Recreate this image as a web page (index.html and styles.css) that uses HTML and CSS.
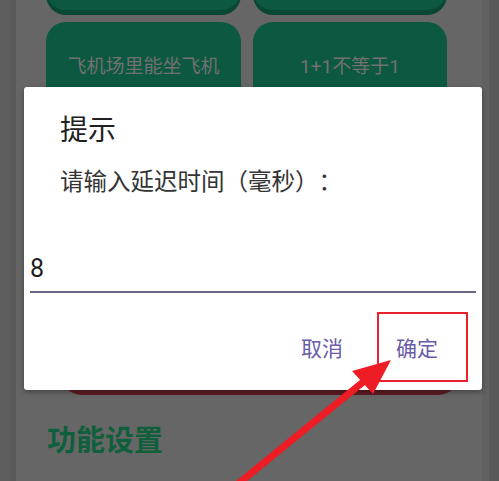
FILE: index.html
```html
<!DOCTYPE html>
<html lang="zh-CN">
<head>
<meta charset="utf-8">
<title>提示</title>
<link rel="stylesheet" href="styles.css">
</head>
<body>
<div class="screen">
  <div class="edge edge-a"></div>
  <div class="edge edge-b"></div>
  <main class="panel">
    <div class="grid">
      <div class="tile"></div>
      <div class="tile"></div>
      <div class="tile">飞机场里能坐飞机</div>
      <div class="tile">1+1不等于1</div>
    </div>
    <div class="danger"></div>
    <h2 class="section">功能设置</h2>
  </main>
  <div class="edge edge-c"></div>
  <div class="edge edge-d"></div>

  <div class="dialog">
    <div class="dlg-title">提示</div>
    <div class="dlg-msg">请输入延迟时间（毫秒）：</div>
    <div class="field">8</div>
    <div class="actions">
      <span class="btn">取消</span>
      <span class="btn">确定</span>
    </div>
  </div>

  <div class="mark"></div>
  <svg class="arrow" width="499" height="481" viewBox="0 0 499 481">
    <line x1="228" y1="492" x2="368" y2="378" stroke="#ee1c25" stroke-width="7"/>
    <polygon points="391,360 352,371 373,394" fill="#ee1c25"/>
  </svg>
</div>
</body>
</html>
```

FILE: styles.css
```css
* { box-sizing: border-box; }
html, body {
  margin: 0;
  padding: 0;
  width: 499px;
  height: 481px;
  overflow: hidden;
  background: #5b5b5b;
  font-family: Roboto, "Noto Sans CJK SC", sans-serif;
  text-spacing-trim: space-all;
}
.screen {
  position: relative;
  display: flex;
  width: 499px;
  height: 481px;
  overflow: hidden;
}
.edge { flex: none; height: 100%; }
.edge-a { width: 11px; background: #5e5e5e; }
.edge-b { width: 5px; background: #5a5a5a; }
.edge-c { width: 7px; background: #616161; }
.edge-d { width: 10px; background: #595959; }
.panel {
  flex: none;
  width: 466px;
  height: 100%;
  background: #666666;
  padding: 0 0 0 30px;
}
.grid {
  display: grid;
  grid-template-columns: 195px 194px;
  grid-auto-rows: 88px;
  column-gap: 12px;
  row-gap: 12px;
  margin-top: -78px;
}
.tile {
  background: #0d5840;
  border-radius: 20px;
  box-shadow: 0 5px 0 #0a4633;
  color: #717171;
  font-size: 19px;
  display: flex;
  align-items: center;
  justify-content: center;
  line-height: 1;
}
.danger {
  width: 400px;
  height: 67px;
  margin: 218px 0 0 14px;
  background: #5e1b22;
  border-radius: 22px;
}
.section {
  margin: 29px 0 0 1px;
  font-size: 29px;
  line-height: 35px;
  font-weight: 700;
  color: #0f5f3d;
}
.dialog {
  position: absolute;
  left: 24px;
  top: 87px;
  width: 458px;
  height: 303px;
  background: #ffffff;
  border-radius: 3px;
  box-shadow: 0 2px 5px rgba(0, 0, 0, 0.35);
  padding-top: 27px;
  display: flex;
  flex-direction: column;
}
.dlg-title {
  margin-left: 36px;
  font-size: 28px;
  line-height: 34px;
  color: #212121;
}
.dlg-msg {
  margin: 20px 0 0 36px;
  font-size: 23.5px;
  line-height: 28px;
  color: #333333;
}
.field {
  margin: 58px 6px 0 6px;
  font-size: 25px;
  line-height: 30px;
  color: #1f1f1f;
  padding-bottom: 7px;
  border-bottom: 2px solid #6b6581;
}
.actions {
  margin-top: 43px;
  display: flex;
  justify-content: flex-end;
  gap: 53px;
  padding-right: 44px;
}
.btn {
  font-size: 21px;
  line-height: 26px;
  color: #6a5ba9;
}
.mark {
  position: absolute;
  left: 377px;
  top: 312px;
  width: 91px;
  height: 70px;
  border: 2px solid #e8212b;
}
.arrow {
  position: absolute;
  left: 0;
  top: 0;
}
```
